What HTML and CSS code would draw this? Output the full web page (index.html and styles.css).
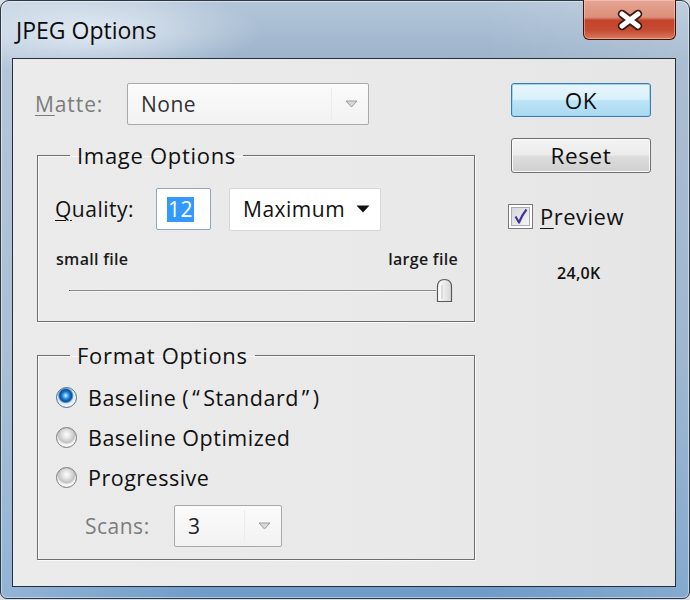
FILE: index.html
```html
<!DOCTYPE html>
<html>
<head>
<meta charset="utf-8">
<link rel="stylesheet" href="styles.css">
</head>
<body>
<div class="window">
  <div class="titlebar">
    <div class="title">JPEG Options</div>
    <div class="close">
      <svg width="28" height="22" viewBox="0 0 28 22">
        <path d="M6 5 L22 17 M22 5 L6 17" stroke="#3a1a12" stroke-width="8.5" stroke-linecap="round"/>
        <path d="M6 5 L22 17 M22 5 L6 17" stroke="#ffffff" stroke-width="5" stroke-linecap="round"/>
      </svg>
    </div>
  </div>
  <div class="client">
    <div class="left">
      <div class="matte-row">
        <span class="lbl dim matte-lbl"><u>M</u>atte:</span>
        <div class="select matte">
          <span class="val">None</span>
          <span class="sep"></span>
          <svg class="arr" width="13" height="8" viewBox="0 0 13 8"><path d="M1 1 H12 L6.5 7 Z" fill="#d8d8d8" stroke="#9a9a9a" stroke-width="1"/></svg>
        </div>
      </div>
      <fieldset class="group image">
        <legend>Image Options</legend>
        <div class="quality-row">
          <span class="lbl quality-lbl"><u>Q</u>uality:</span>
          <div class="num"><span class="hl">12</span></div>
          <div class="select maxsel">
            <span class="val">Maximum</span>
            <svg class="arr" width="14" height="8" viewBox="0 0 14 8"><path d="M0.5 0.5 H13.5 L7 7.5 Z" fill="#111"/></svg>
          </div>
        </div>
        <div class="scale-labels"><span>small file</span><span>large file</span></div>
        <div class="slider">
          <div class="track"></div>
          <svg class="thumb" width="17" height="25" viewBox="0 0 17 25">
            <defs><linearGradient id="tg" x1="0" x2="1" y1="0" y2="0"><stop offset="0" stop-color="#ffffff"/><stop offset="1" stop-color="#d6d6d6"/></linearGradient></defs>
            <path d="M1.5 23.5 V9 Q1.5 1.5 8.5 1.5 Q15.5 1.5 15.5 9 V23.5 Z" fill="url(#tg)" stroke="#5a5a5a" stroke-width="1.2"/>
            <path d="M6 7 V21" stroke="#c8c8c8" stroke-width="1"/>
          </svg>
        </div>
      </fieldset>
      <fieldset class="group format">
        <legend>Format Options</legend>
        <div class="radio"><span class="dot on"></span><span>Baseline (<span class="q">“</span>Standard<span class="q">”</span>)</span></div>
        <div class="radio"><span class="dot"></span><span>Baseline Optimized</span></div>
        <div class="radio"><span class="dot"></span><span>Progressive</span></div>
        <div class="scans-row">
          <span class="lbl dim scans-lbl">Scans:</span>
          <div class="select scans">
            <span class="val">3</span>
            <span class="sep"></span>
            <svg class="arr" width="13" height="8" viewBox="0 0 13 8"><path d="M1 1 H12 L6.5 7 Z" fill="#d8d8d8" stroke="#9a9a9a" stroke-width="1"/></svg>
          </div>
        </div>
      </fieldset>
    </div>
    <div class="right">
      <div class="btn ok">OK</div>
      <div class="btn reset">Reset</div>
      <div class="check">
        <svg width="25" height="25" viewBox="0 0 25 25">
          <defs><linearGradient id="cg" x1="0" y1="0" x2="1" y2="1"><stop offset="0" stop-color="#d4d6dc"/><stop offset="1" stop-color="#f6f6f6"/></linearGradient></defs>
          <rect x="0.5" y="0.5" width="24" height="24" fill="#ffffff" stroke="#7a7a7a"/>
          <rect x="3.5" y="3.5" width="18" height="18" fill="url(#cg)" stroke="#a9abb2"/>
          <path d="M7.5 12.5 L11 18.5 Q14 11 18.5 5.5" fill="none" stroke="#45349a" stroke-width="2.2" stroke-linejoin="round"/>
        </svg>
        <span class="lbl"><u>P</u>review</span>
      </div>
      <div class="size">24,0K</div>
    </div>
  </div>
</div>
</body>
</html>
```
FILE: styles.css
```css
html, body {
  margin: 0;
  padding: 0;
  background: #d9dde2;
}
body {
  width: 690px;
  height: 600px;
  overflow: hidden;
  font-family: "Open Sans", "Noto Sans", sans-serif;
  color: #111;
}
.window {
  box-sizing: border-box;
  width: 690px;
  height: 599px;
  border: 1px solid #2d3845;
  border-radius: 9px 9px 7px 7px;
  padding: 0 13px 11px 11px;
  display: flex;
  flex-direction: column;
  background:
    radial-gradient(ellipse 170px 45px at 90px 30px, rgba(232,240,248,0.85), rgba(232,240,248,0) 100%),
    linear-gradient(to right, rgba(255,255,255,0.25) 0%, rgba(255,255,255,0) 30%, rgba(0,0,0,0) 70%, rgba(255,255,255,0.15) 100%),
    linear-gradient(#b4c6d9 0%, #9cb3cb 10%, #8eabc7 60%, #6f9bc8 100%);
  box-shadow: inset 0 0 0 1px rgba(255,255,255,0.45);
}
.titlebar {
  height: 57px;
  flex: none;
  display: flex;
  align-items: flex-start;
}
.title {
  font-size: 23px;
  line-height: 30px;
  padding: 14px 0 0 4px;
  color: #0c0c0c;
}
.close {
  margin-left: auto;
  margin-top: -1px;
  box-sizing: border-box;
  width: 93px;
  height: 40px;
  border: 1px solid #401409;
  border-top: none;
  border-radius: 0 0 6px 6px;
  background: linear-gradient(#e6a493 0%, #dc907c 44%, #c2432a 52%, #c54c33 78%, #dc7a60 100%);
  box-shadow: inset 0 0 0 1px rgba(255,220,210,0.45);
  display: flex;
  align-items: center;
  justify-content: center;
}
.close svg { margin-top: 1px; }
.client {
  flex: 1;
  box-sizing: border-box;
  border: 1px solid #25303c;
  background: linear-gradient(to right, #ebebeb, #e9e9e9 60%, #e5e5e5);
  padding: 24px 0 0 24px;
  display: flex;
  align-items: flex-start;
}
.left {
  width: 438px;
  display: flex;
  flex-direction: column;
}
.lbl {
  font-size: 21px;
  letter-spacing: 0.5px;
}
.dim { color: #7c7c7c; }
u { text-decoration-thickness: 1px; text-underline-offset: 3px; }
.matte-row {
  display: flex;
  align-items: center;
  height: 42px;
}
.matte-lbl {
  margin-left: -2px;
  width: 92px;
  letter-spacing: 0.9px;
}
.select {
  box-sizing: border-box;
  display: flex;
  align-items: center;
  font-size: 21px;
  letter-spacing: 0.5px;
}
.select .val { padding-left: 13px; }
.matte {
  width: 242px;
  height: 42px;
  border: 1px solid #a9a9a9;
  border-radius: 2px;
  background: linear-gradient(#fbfbfb, #f2f2f2);
  color: #333;
}
.select .sep {
  margin-left: auto;
  width: 1px;
  align-self: stretch;
  margin-top: 4px;
  margin-bottom: 4px;
  background: #ececec;
}
.matte .arr { margin: 0 10px 0 13px; }
.group {
  margin: 0;
  padding: 0;
  min-width: 0;
  border: 1px solid #6e6e6e;
  box-shadow: 1px 1px 0 #fafafa, inset 1px 1px 0 #fafafa;
}
.group legend {
  font-size: 22px;
  line-height: 26px;
  letter-spacing: 0.7px;
  margin-left: 32px;
  padding: 0 7px;
  color: #111;
}
.image { margin-top: 17px; }
.quality-row {
  margin-top: 19px;
  height: 44px;
  display: flex;
  align-items: center;
  padding-left: 17px;
}
.quality-lbl {
  width: 101px;
  color: #111;
}
.num {
  box-sizing: border-box;
  width: 55px;
  height: 42px;
  border: 1px solid #8ea6c2;
  border-radius: 2px;
  background: #fff;
  display: flex;
  align-items: center;
  padding-left: 10px;
}
.hl {
  background: #3399ff;
  color: #fff;
  font-size: 21px;
  line-height: 25px;
  padding: 0 1px;
  letter-spacing: 0.5px;
}
.maxsel {
  margin-left: 18px;
  width: 152px;
  height: 43px;
  border: 1px solid #d6d6d6;
  border-radius: 2px;
  background: #fff;
  color: #111;
}
.maxsel .arr { margin-left: auto; margin-right: 10px; }
.scale-labels {
  margin-top: 18px;
  display: flex;
  justify-content: space-between;
  padding: 0 16px 0 18px;
  font-size: 16px;
  font-weight: 600;
  line-height: 20px;
  letter-spacing: 0.3px;
  color: #1a1a1a;
}
.slider {
  margin-top: 9px;
  height: 25px;
  display: flex;
  align-items: center;
  padding: 0 21px 18px 31px;
}
.track {
  flex: 1;
  height: 1px;
  background: #8a8a8a;
  border-left: 1px solid #555;
  box-shadow: 0 1px 0 #f6f6f6;
}
.format {
  margin-top: 20px;
  padding: 9px 0 12px 0;
}
.radio {
  height: 40px;
  display: flex;
  align-items: center;
  padding-left: 18px;
  font-size: 21.5px;
  letter-spacing: 0.5px;
  color: #111;
}
.q { padding: 0 3px; }
.dot {
  box-sizing: border-box;
  width: 21px;
  height: 21px;
  border-radius: 50%;
  border: 1px solid #7a7a7a;
  margin-right: 11px;
  background: radial-gradient(circle at 50% 35%, #ffffff 0, #e4e4e4 4px, #c2c2c2 8px, #dedede 9px, #f6f6f6 10px);
}
.dot.on {
  border-color: #4d6e91;
  background: radial-gradient(circle at 46% 40%, #d6f0ff 0, #5cb8f2 2px, #1677cf 4px, #0a4f97 6px, #5e92c4 7px, #d7e8f6 8px, #f2f6fa 10px);
}
.scans-row {
  margin-top: 8px;
  display: flex;
  align-items: center;
  padding-left: 47px;
}
.scans-lbl { width: 89px; }
.scans {
  width: 108px;
  height: 42px;
  border: 1px solid #a9a9a9;
  border-radius: 2px;
  background: linear-gradient(#fbfbfb, #f2f2f2);
  color: #222;
}
.scans .arr { margin: 0 10px 0 13px; }
.right {
  margin-left: 36px;
  width: 140px;
  display: flex;
  flex-direction: column;
  align-items: flex-start;
}
.btn {
  box-sizing: border-box;
  width: 140px;
  display: flex;
  align-items: center;
  justify-content: center;
  font-size: 22.5px;
  letter-spacing: 0.6px;
  border-radius: 3px;
  color: #0e0e0e;
}
.ok {
  height: 34px;
  border: 1px solid #3a7cb0;
  background: linear-gradient(#e8f6fd 0%, #d9f0fb 48%, #bde4f6 52%, #a9d9f2 100%);
  box-shadow: inset 0 0 0 1px #9ad5f3;
}
.reset {
  margin-top: 21px;
  height: 35px;
  border: 1px solid #6f6f6f;
  background: linear-gradient(#f3f3f3 0%, #ebebeb 48%, #dddddd 52%, #cfcfcf 100%);
  box-shadow: inset 0 0 0 1px #fbfbfb;
}
.check {
  margin-top: 30px;
  margin-left: -3px;
  height: 26px;
  display: flex;
  align-items: center;
}
.check svg { margin-right: 7px; }
.check .lbl { font-size: 22px; color: #111; }
.size {
  margin-top: 34px;
  margin-left: 46px;
  font-size: 16px;
  font-weight: 600;
  line-height: 20px;
  letter-spacing: 0.3px;
  color: #111;
}
```
